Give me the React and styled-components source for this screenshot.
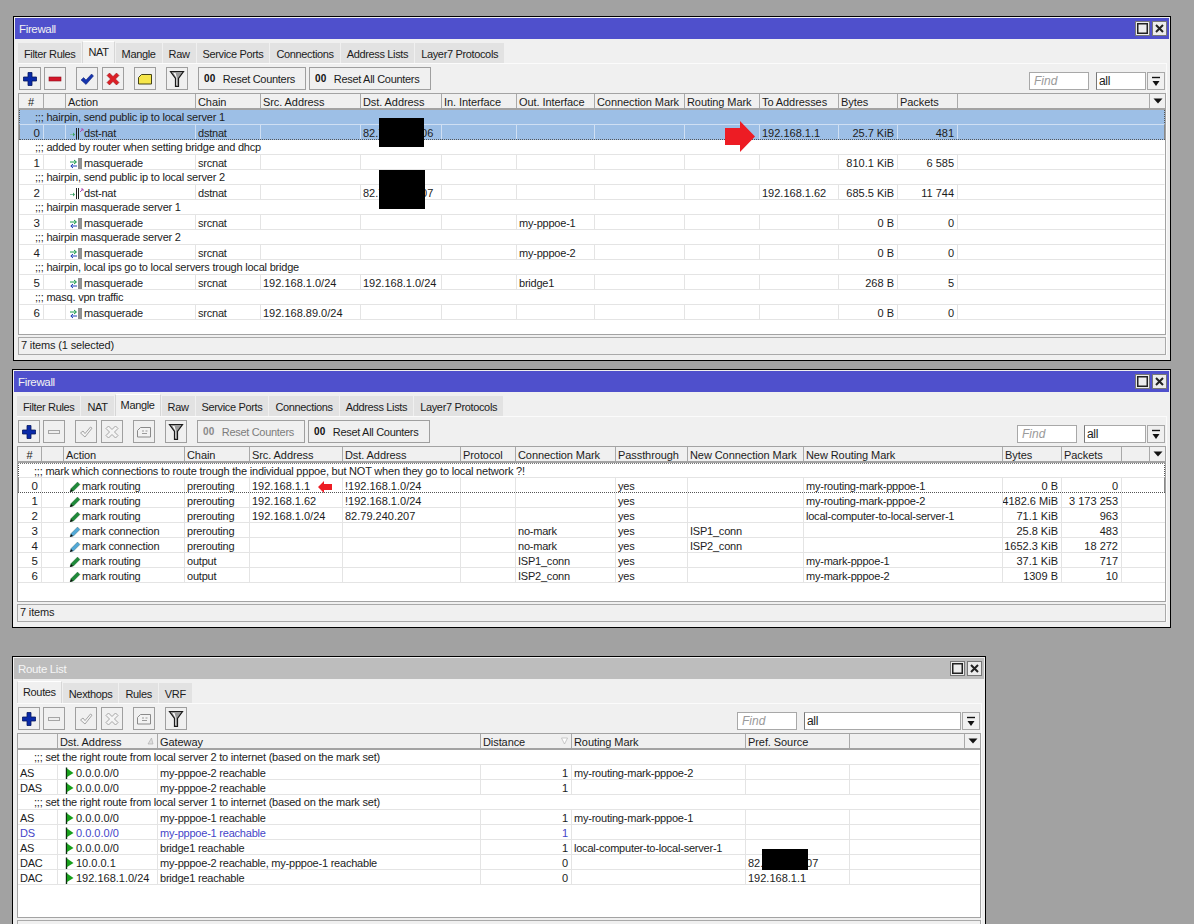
import React from "react";
import styled, { createGlobalStyle } from "styled-components";

const Global = createGlobalStyle`
  html, body { margin: 0; padding: 0; background: #a2a2a2; }
  * { box-sizing: border-box; }
`;

const Desktop = styled.div`
  position: relative;
  width: 1194px;
  height: 924px;
  overflow: hidden;
  background: #a2a2a2;
  font-family: "Liberation Sans", Arial, sans-serif;
  font-size: 11px;
  color: #1c1c1c;
`;

const Win = styled.section`
  position: absolute;
  left: ${(p) => p.$x}px;
  top: ${(p) => p.$y}px;
  width: ${(p) => p.$w}px;
  height: ${(p) => p.$h}px;
  border: 1px solid #000;
  padding: 1px;
  background: #f0f0f0;
  display: flex;
  flex-direction: column;
`;

const TitleBar = styled.header`
  flex: none;
  height: 21px;
  background: ${(p) => (p.$active ? "#4f50cc" : "#bdbdbd")};
  color: ${(p) => (p.$active ? "#f2f2f2" : "#f5f5f5")};
  display: flex;
  align-items: center;
  justify-content: space-between;
  padding: 0 2px 0 4px;
  font-size: 11.5px;
  letter-spacing: -0.35px;
`;

const WinButtons = styled.div`
  display: flex;
  gap: 2px;
`;

const WinButton = styled.button`
  width: 15px;
  height: 15px;
  padding: 0;
  border: 1px solid #777;
  background: #ececec;
  display: flex;
  align-items: center;
  justify-content: center;
`;

const Body = styled.div`
  flex: 1;
  min-height: 0;
  display: flex;
  flex-direction: column;
  padding: 2px 3px 4px 3px;
`;

const TabBar = styled.nav`
  flex: none;
  height: 22px;
  display: flex;
  align-items: flex-end;
  gap: 1px;
`;

const Tab = styled.div`
  height: ${(p) => (p.$active ? "22px" : "20px")};
  padding: ${(p) => (p.$active ? "0 5px 2px" : "0 5px 0")};
  display: flex;
  align-items: center;
  background: ${(p) => (p.$active ? "#f0f0f0" : "#e2e2e2")};
  border: 1px solid ${(p) => (p.$active ? "#d6d6d6" : "#e2e2e2")};
  border-bottom: 0;
  border-top-color: ${(p) => (p.$active ? "#fff" : "#e2e2e2")};
  white-space: nowrap;
  letter-spacing: -0.35px;
`;

const Panel = styled.div`
  flex: 1;
  min-height: 0;
  display: flex;
  flex-direction: column;
  border-top: 1px solid #fbfbfb;
  padding-top: 3px;
  box-shadow: 1px 0 0 #fbfbfb;
`;

const Toolbar = styled.div`
  flex: none;
  height: 23px;
  display: flex;
  gap: 10px;
  padding: 0 1px;
  margin-bottom: 3px;
`;

const ToolGroup = styled.div`
  display: flex;
  gap: ${(p) => p.$gap || 3}px;
`;

const ToolButton = styled.button`
  width: ${(p) => (p.$wide ? `${p.$wide}px` : "22px")};
  height: 23px;
  padding: 0 ${(p) => (p.$wide ? "5px" : "0")};
  border: 1px solid #9f9f9f;
  background: #f0f0f0;
  display: flex;
  align-items: center;
  gap: 7px;
  justify-content: ${(p) => (p.$wide ? "flex-start" : "center")};
  font: 11px "Liberation Sans", Arial, sans-serif;
  letter-spacing: -0.3px;
  color: ${(p) => (p.$off ? "#7c7c7c" : "#1c1c1c")};
  white-space: nowrap;
`;

const Zeros = styled.b`
  font-size: 10px;
  letter-spacing: 0.3px;
  color: ${(p) => (p.$off ? "#8a8a8a" : "#111")};
`;

const FindGroup = styled.div`
  margin-left: auto;
  display: flex;
  align-items: flex-end;
`;

const FindBox = styled.div`
  width: 60px;
  height: 18px;
  margin-right: 7px;
  padding-left: 4px;
  border: 1px solid #a8a8a8;
  background: #fff;
  color: #9a9a9a;
  font-style: italic;
  font-size: 12px;
  line-height: 16px;
`;

const AllBox = styled.div`
  width: ${(p) => p.$w}px;
  height: 18px;
  margin-right: 1px;
  padding-left: 2px;
  border: 1px solid #a8a8a8;
  border-left-color: #777;
  background: #fff;
  font-size: 12px;
  line-height: 17px;
  letter-spacing: -0.3px;
`;

const DropButton = styled.div`
  width: 18px;
  height: 18px;
  border: 1px solid #a8a8a8;
  background: #f0f0f0;
  display: flex;
  align-items: center;
  justify-content: center;
`;

const Table = styled.div`
  flex: 1;
  min-height: 0;
  border: 1px solid #a3a3a3;
  background: #fff;
  overflow: hidden;
`;

const HeadRow = styled.div`
  display: grid;
  grid-template-columns: ${(p) => p.$cols};
  height: 16px;
  background: #f0f0f0;
  border-bottom: 2px solid #a3a3a3;
`;

const HeadCell = styled.div`
  position: relative;
  padding-left: ${(p) => (p.$center ? "0" : "2px")};
  text-align: ${(p) => (p.$center ? "center" : "left")};
  line-height: 16px;
  letter-spacing: -0.08px;
  border-right: 1px solid #a9a9a9;
  white-space: nowrap;
  overflow: hidden;
  &:last-child { border-right: 0; }
`;

const SortMark = styled.span`
  position: absolute;
  right: ${(p) => p.$r}px;
  top: 3px;
  display: flex;
`;

const MenuMark = styled.span`
  position: absolute;
  right: 0;
  top: 0;
  width: 16px;
  height: 14px;
  border-left: 1px solid #a9a9a9;
  display: flex;
  align-items: center;
  justify-content: center;
`;

const rowBg = (p) => (p.$selected ? "#9dbfe6" : "#fff");
const rowLine = (p) => (p.$selected ? "#cfdff3" : "#e4e4e4");

const CommentRow = styled.div`
  height: 15px;
  padding-left: 15px;
  line-height: 15px;
  letter-spacing: -0.21px;
  white-space: nowrap;
  background: ${rowBg};
  border-bottom: 1px solid ${rowLine};
  border-left: 1px ${(p) => (p.$focus ? "dotted #555" : "solid transparent")};
  border-right: 1px ${(p) => (p.$focus ? "dotted #555" : "solid transparent")};
  border-top: ${(p) => (p.$focus && !p.$selected ? "1px dotted #777" : "0")};
`;

const DataRow = styled.div`
  display: grid;
  grid-template-columns: ${(p) => p.$cols};
  height: 15px;
  background: ${rowBg};
  border-bottom: 1px ${(p) => (p.$focus ? "dotted #555" : `solid ${rowLine(p)}`)};
  color: ${(p) => (p.$dim ? "#4545c8" : "inherit")};
  box-shadow: ${(p) => (p.$focus ? "inset 1px 0 0 #888, inset -1px 0 0 #888" : "none")};
`;

const Cell = styled.div`
  display: flex;
  align-items: center;
  height: 14px;
  padding: 2px ${(p) => (p.$right ? "3px" : "0")} 0 ${(p) => p.$left ?? 2}px;
  justify-content: ${(p) => (p.$right ? "flex-end" : "flex-start")};
  letter-spacing: ${(p) => (p.$tight ? "-0.22px" : "0")};
  border-right: 1px solid ${rowLine};
  white-space: nowrap;
  overflow: hidden;
  &:last-child { border-right: 0; }
`;

const NumCell = styled(Cell)`
  padding-right: 3px;
  font-size: 11.5px;
`;

const StatusBar = styled.footer`
  flex: none;
  height: 18px;
  margin-top: 2px;
  padding-left: 2px;
  border: 1px solid #a9a9a9;
  background: #f0f0f0;
  line-height: 15px;
  letter-spacing: -0.15px;
`;

const Redact = styled.div`
  position: absolute;
  left: ${(p) => p.$x}px;
  top: ${(p) => p.$y}px;
  width: ${(p) => p.$w}px;
  height: ${(p) => p.$h}px;
  background: #000;
`;

const Arrow = styled.svg`
  position: absolute;
  left: ${(p) => p.$x}px;
  top: ${(p) => p.$y}px;
`;

/* ---------- icons ---------- */
const Svg = ({ w = 16, h = 16, children }) => (
  <svg width={w} height={h} viewBox={`0 0 ${w} ${h}`} style={{ flex: "none" }}>{children}</svg>
);

const PlusIcon = () => (
  <Svg>
    <path d="M6 1.5h4v4.5h4.5v4H10v4.5H6V10H1.5V6H6z" fill="#0a2aa8" stroke="#05185f" strokeWidth="0.8" />
  </Svg>
);
const MinusIcon = ({ off }) => (
  <Svg>
    {off ? (
      <rect x="2.5" y="6.5" width="11" height="3" fill="#eee" stroke="#a5a5a5" />
    ) : (
      <rect x="2" y="6" width="12" height="4" fill="#d3162a" stroke="#8d0f1b" strokeWidth="0.6" />
    )}
  </Svg>
);
const CheckIcon = ({ off }) => (
  <Svg>
    {off ? (
      <path d="M2.5 9l2.5-2 2 2.6L12.5 3l1.5 1.2L7 13z" fill="#f4f4f4" stroke="#a5a5a5" />
    ) : (
      <path d="M2 9l2.6-2.4L7 9l5.6-6L14.5 5 7 13.5z" fill="#1634ad" stroke="#0b1f73" strokeWidth="0.5" />
    )}
  </Svg>
);
const CrossIcon = ({ off }) => (
  <Svg>
    <path
      d="M4.5 2L8 5.5 11.5 2 14 4.5 10.5 8 14 11.5 11.5 14 8 10.5 4.5 14 2 11.5 5.5 8 2 4.5z"
      fill={off ? "#f4f4f4" : "#dc1f26"}
      stroke={off ? "#a5a5a5" : "#8f1014"}
      strokeWidth={off ? 1 : 0.5}
    />
  </Svg>
);
const NoteIcon = ({ off }) => (
  <Svg>
    <path
      d="M4.5 3.5h10v9.5h-13V6.5z"
      fill={off ? "#f2f2f2" : "#f6e64a"}
      stroke={off ? "#8a8a8a" : "#46461a"}
    />
    {off && <path d="M6 7h2M9.5 7h2M6 9.5h5" stroke="#9a9a9a" />}
  </Svg>
);
const FilterIcon = () => (
  <Svg h={18}>
    <path d="M1.5 1.5h13L9.5 8.5v8h-3v-8z" fill="#9b9b9b" stroke="#1a1a1a" strokeWidth="1.2" />
    <path d="M4.5 3h2l1.6 5.5v6.5H7.5V8z" fill="#fff" />
  </Svg>
);
const DropIcon = () => (
  <Svg w={10} h={11}>
    <path d="M1 1.5h8" stroke="#111" strokeWidth="1.4" />
    <path d="M1.5 5h7L5 10z" fill="#111" />
  </Svg>
);
const MenuIcon = () => (
  <Svg w={10} h={6}>
    <path d="M0.5 0.5h9L5 5.5z" fill="#111" />
  </Svg>
);
const DstNatIcon = () => (
  <Svg w={14} h={13}>
    <path d="M0 7.5h3" stroke="#7fbfa0" />
    <path d="M3 5.5l2 2-2 2z" fill="#3aa060" />
    <path d="M6.5 1v11M8.5 1v11" stroke="#222" />
    <path d="M10 5l3-3M11 2h2v2" stroke="#b050b0" fill="none" />
  </Svg>
);
const MasqIcon = () => (
  <Svg w={14} h={13}>
    <path d="M0 5h6" stroke="#159a4a" />
    <path d="M4 3l2.5 2L4 7" stroke="#159a4a" fill="none" />
    <path d="M1 9h6" stroke="#1b3fb5" />
    <path d="M3 7l-2.2 2L3 11" stroke="#1b3fb5" fill="none" />
    <path d="M9 1v11M11 1v11" stroke="#222" />
  </Svg>
);
const PencilIcon = ({ color }) => (
  <Svg w={14} h={13}>
    <path d="M2 12l1-3.5L9.5 2l2.5 2.5L5.5 11z" fill={color} stroke="#1b3a20" strokeOpacity="0.5" strokeWidth="0.5" />
    <path d="M2 12l1-3 2 2z" fill="#111" />
  </Svg>
);
const FlagIcon = () => (
  <Svg w={11} h={13}>
    <path d="M1.5 0.5v12" stroke="#0e2e10" strokeWidth="1.4" />
    <path d="M2 1.5L8.5 6 2 10z" fill="#18a01c" />
  </Svg>
);
const SortUp = () => (
  <Svg w={7} h={8}><path d="M1 7h5L4.5 1z" fill="#ddd" stroke="#aaa" strokeWidth="0.6" /></Svg>
);
const SortDown = () => (
  <Svg w={7} h={8}><path d="M0.5 1h6L3.5 7z" fill="#fff" stroke="#b5b5b5" strokeWidth="0.7" /></Svg>
);

const actionIcon = {
  nat: <DstNatIcon />,
  masq: <MasqIcon />,
  route: <PencilIcon color="#1f8a3a" />,
  conn: <PencilIcon color="#52a8d8" />,
};

/* ---------- shared parts ---------- */
const FirewallTools = ({ off }) => (
  <>
    <ToolGroup>
      <ToolButton><PlusIcon /></ToolButton>
      <ToolButton><MinusIcon off={off} /></ToolButton>
    </ToolGroup>
    <ToolGroup $gap={4}>
      <ToolButton><CheckIcon off={off} /></ToolButton>
      <ToolButton><CrossIcon off={off} /></ToolButton>
    </ToolGroup>
    <ToolButton><NoteIcon off={off} /></ToolButton>
    <ToolButton><FilterIcon /></ToolButton>
  </>
);

const ResetButtons = ({ off }) => (
  <ToolGroup>
    <ToolButton $wide={108} $off={off}><Zeros $off={off}>00</Zeros>Reset Counters</ToolButton>
    <ToolButton $wide={122}><Zeros>00</Zeros>Reset All Counters</ToolButton>
  </ToolGroup>
);

const hasLetters = (v) => /[a-z]/i.test(v);

const Window = ({ x, y, w, h, active, title, tabs, activeTab, tools, allWidth, cols, heads, rows, status }) => {
  const template = cols.map((c) => (c === "fr" ? "1fr" : `${c}px`)).join(" ");
  return (
    <Win $x={x} $y={y} $w={w} $h={h}>
      <TitleBar $active={active}>
        <span>{title}</span>
        <WinButtons>
          <WinButton aria-label="maximize">
            <Svg w={11} h={11}><rect x="0.75" y="0.75" width="9.5" height="9.5" fill="none" stroke="#222" strokeWidth="1.5" /></Svg>
          </WinButton>
          <WinButton aria-label="close">
            <Svg w={9} h={9}><path d="M1 1l7 7M8 1L1 8" stroke="#222" strokeWidth="2" /></Svg>
          </WinButton>
        </WinButtons>
      </TitleBar>
      <Body>
        <TabBar>
          {tabs.map((t) => (
            <Tab key={t} $active={t === activeTab}>{t}</Tab>
          ))}
        </TabBar>
        <Panel>
          <Toolbar>
            {tools}
            <FindGroup>
              <FindBox>Find</FindBox>
              <AllBox $w={allWidth}>all</AllBox>
              <DropButton><DropIcon /></DropButton>
            </FindGroup>
          </Toolbar>
          <Table>
            <HeadRow $cols={template}>
              {heads.map((c, i) => (
                <HeadCell key={i} $center={c.text === "#"}>
                  {c.text}
                  {c.sort === "up" && <SortMark $r={3}><SortUp /></SortMark>}
                  {c.sort === "down" && <SortMark $r={3}><SortDown /></SortMark>}
                  {i === heads.length - 1 && <MenuMark><MenuIcon /></MenuMark>}
                </HeadCell>
              ))}
            </HeadRow>
            {rows.map((r, i) =>
              r.comment ? (
                <CommentRow key={i} $selected={r.selected} $focus={r.focus}>;;; {r.comment}</CommentRow>
              ) : (
                <DataRow key={i} $cols={template} $selected={r.selected} $focus={r.focus} $dim={r.dim}>
                  {r.cells.map((v, j) => {
                    const head = heads[j];
                    if (head.text === "#") return <NumCell key={j} $right $selected={r.selected}>{v}</NumCell>;
                    if (head.kind === "action") {
                      return (
                        <Cell key={j} $left={4} $tight $selected={r.selected}>
                          {actionIcon[v[0]]}
                          <span>{v[1]}</span>
                        </Cell>
                      );
                    }
                    if (head.kind === "route") {
                      return (
                        <Cell key={j} $left={7} $selected={r.selected}>
                          <FlagIcon />
                          <span>{v}</span>
                        </Cell>
                      );
                    }
                    return (
                      <Cell key={j} $right={head.right} $tight={!head.right && hasLetters(v)} $selected={r.selected}>
                        {v}
                      </Cell>
                    );
                  })}
                </DataRow>
              )
            )}
          </Table>
          <StatusBar>{status}</StatusBar>
        </Panel>
      </Body>
    </Win>
  );
};

/* ---------- data ---------- */
const fwTabs = ["Filter Rules", "NAT", "Mangle", "Raw", "Service Ports", "Connections", "Address Lists", "Layer7 Protocols"];

const natCols = [25, 22, 130, 65, 100, 81, 75, 78, 90, 75, 79, 59, 60, "fr"];
const natHeads = [
  { text: "#" }, { text: "" }, { text: "Action", kind: "action" }, { text: "Chain" }, { text: "Src. Address" },
  { text: "Dst. Address" }, { text: "In. Interface" }, { text: "Out. Interface" }, { text: "Connection Mark" },
  { text: "Routing Mark" }, { text: "To Addresses" }, { text: "Bytes", right: true }, { text: "Packets", right: true }, { text: "" },
];
const nat = (n, a, chain, src, dst, out, to, bytes, pk, extra = {}) => ({
  ...extra,
  cells: [n, "", a, chain, src, dst, "", out, "", "", to, bytes, pk, ""],
});
const NATA = ["nat", "dst-nat"];
const MASQ = ["masq", "masquerade"];
const natRows = [
  { comment: "hairpin, send public ip to local server 1", selected: true, focus: true },
  nat("0", NATA, "dstnat", "", "82.79.240.206", "", "192.168.1.1", "25.7 KiB", "481", { selected: true, focus: true }),
  { comment: "added by router when setting bridge and dhcp" },
  nat("1", MASQ, "srcnat", "", "", "", "", "810.1 KiB", "6 585"),
  { comment: "hairpin, send public ip to local server 2" },
  nat("2", NATA, "dstnat", "", "82.79.240.207", "", "192.168.1.62", "685.5 KiB", "11 744"),
  { comment: "hairpin masquerade server 1" },
  nat("3", MASQ, "srcnat", "", "", "my-pppoe-1", "", "0 B", "0"),
  { comment: "hairpin masquerade server 2" },
  nat("4", MASQ, "srcnat", "", "", "my-pppoe-2", "", "0 B", "0"),
  { comment: "hairpin, local ips go to local servers trough local bridge" },
  nat("5", MASQ, "srcnat", "192.168.1.0/24", "192.168.1.0/24", "bridge1", "", "268 B", "5"),
  { comment: "masq. vpn traffic" },
  nat("6", MASQ, "srcnat", "192.168.89.0/24", "", "", "", "0 B", "0"),
];

const mangleCols = [24, 22, 121, 65, 93, 118, 55, 100, 72, 116, 199, 59, 60, "fr"];
const mangleHeads = [
  { text: "#" }, { text: "" }, { text: "Action", kind: "action" }, { text: "Chain" }, { text: "Src. Address" },
  { text: "Dst. Address" }, { text: "Protocol" }, { text: "Connection Mark" }, { text: "Passthrough" },
  { text: "New Connection Mark" }, { text: "New Routing Mark" }, { text: "Bytes", right: true }, { text: "Packets", right: true }, { text: "" },
];
const mangle = (n, a, chain, src, dst, cm, ncm, nrm, bytes, pk, extra = {}) => ({
  ...extra,
  cells: [n, "", a, chain, src, dst, "", cm, "yes", ncm, nrm, bytes, pk, ""],
});
const MR = ["route", "mark routing"];
const MC = ["conn", "mark connection"];
const mangleRows = [
  { comment: "mark which connections to route trough the individual pppoe, but NOT when they go to local network ?!", focus: true },
  mangle("0", MR, "prerouting", "192.168.1.1", "!192.168.1.0/24", "", "", "my-routing-mark-pppoe-1", "0 B", "0", { focus: true }),
  mangle("1", MR, "prerouting", "192.168.1.62", "!192.168.1.0/24", "", "", "my-routing-mark-pppoe-2", "4182.6 MiB", "3 173 253"),
  mangle("2", MR, "prerouting", "192.168.1.0/24", "82.79.240.207", "", "", "local-computer-to-local-server-1", "71.1 KiB", "963"),
  mangle("3", MC, "prerouting", "", "", "no-mark", "ISP1_conn", "", "25.8 KiB", "483"),
  mangle("4", MC, "prerouting", "", "", "no-mark", "ISP2_conn", "", "1652.3 KiB", "18 272"),
  mangle("5", MR, "output", "", "", "ISP1_conn", "", "my-mark-pppoe-1", "37.1 KiB", "717"),
  mangle("6", MR, "output", "", "", "ISP2_conn", "", "my-mark-pppoe-2", "1309 B", "10"),
];

const routeCols = [40, 100, 323, 91, 174, 104, "fr"];
const routeHeads = [
  { text: "" }, { text: "Dst. Address", kind: "route", sort: "up" }, { text: "Gateway" },
  { text: "Distance", right: true, sort: "down" }, { text: "Routing Mark" }, { text: "Pref. Source" }, { text: "" },
];
const route = (f, d, g, dist, rm, src, extra = {}) => ({ ...extra, cells: [f, d, g, dist, rm, src, ""] });
const routeRows = [
  { comment: "set the right route from local server 2 to internet (based on the mark set)" },
  route("AS", "0.0.0.0/0", "my-pppoe-2 reachable", "1", "my-routing-mark-pppoe-2", ""),
  route("DAS", "0.0.0.0/0", "my-pppoe-2 reachable", "1", "", ""),
  { comment: "set the right route from local server 1 to internet (based on the mark set)" },
  route("AS", "0.0.0.0/0", "my-pppoe-1 reachable", "1", "my-routing-mark-pppoe-1", ""),
  route("DS", "0.0.0.0/0", "my-pppoe-1 reachable", "1", "", "", { dim: true }),
  route("AS", "0.0.0.0/0", "bridge1 reachable", "1", "local-computer-to-local-server-1", ""),
  route("DAC", "10.0.0.1", "my-pppoe-2 reachable, my-pppoe-1 reachable", "0", "", "82.79.240.207"),
  route("DAC", "192.168.1.0/24", "bridge1 reachable", "0", "", "192.168.1.1"),
];

export default function App() {
  return (
    <Desktop>
      <Global />
      <Window
        x={13} y={16} w={1158} h={345} active title="Firewall"
        tabs={fwTabs} activeTab="NAT"
        tools={<><FirewallTools /><ResetButtons /></>}
        allWidth={50} cols={natCols} heads={natHeads} rows={natRows} status="7 items (1 selected)"
      />
      <Window
        x={12} y={369} w={1159} h={259} active title="Firewall"
        tabs={fwTabs} activeTab="Mangle"
        tools={<><FirewallTools off /><ResetButtons off /></>}
        allWidth={62} cols={mangleCols} heads={mangleHeads} rows={mangleRows} status="7 items"
      />
      <Window
        x={12} y={656} w={974} h={288} title="Route List"
        tabs={["Routes", "Nexthops", "Rules", "VRF"]} activeTab="Routes"
        tools={<FirewallTools off />}
        allWidth={157} cols={routeCols} heads={routeHeads} rows={routeRows} status=""
      />
      <Redact $x={379} $y={118} $w={45} $h={29} />
      <Redact $x={379} $y={170} $w={46} $h={39} />
      <Redact $x={762} $y={849} $w={46} $h={21} />
      <Arrow $x={725} $y={121} width={30} height={31} viewBox="0 0 30 31">
        <path d="M0 7h15V0l15 15.5L15 31v-7H0z" fill="#ed1c24" />
      </Arrow>
      <Arrow $x={318} $y={481} width={14} height={12} viewBox="0 0 14 12">
        <path d="M14 3H6V0L0 6l6 6V9h8z" fill="#ed1c24" />
      </Arrow>
    </Desktop>
  );
}
